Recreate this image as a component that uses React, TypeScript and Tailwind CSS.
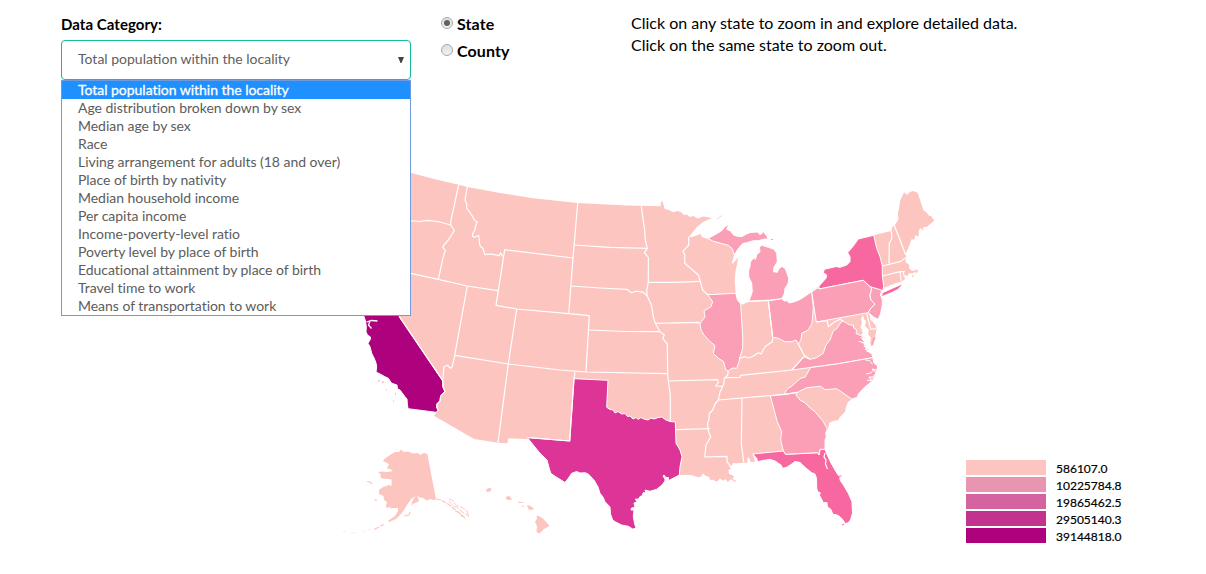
import React from "react";

const LIGHT = "#fcc5c0";
const ROSE = "#fa9fb5";
const PINK = "#f768a1";
const MAGENTA = "#dd3497";
const PURPLE = "#ae017e";

const categories = [
  "Total population within the locality",
  "Age distribution broken down by sex",
  "Median age by sex",
  "Race",
  "Living arrangement for adults (18 and over)",
  "Place of birth by nativity",
  "Median household income",
  "Per capita income",
  "Income-poverty-level ratio",
  "Poverty level by place of birth",
  "Educational attainment by place of birth",
  "Travel time to work",
  "Means of transportation to work",
];

const legend = [
  { color: "bg-[#fcc5c0]", label: "586107.0" },
  { color: "bg-[#e994b0]", label: "10225784.8" },
  { color: "bg-[#d5639f]", label: "19865462.5" },
  { color: "bg-[#c2328f]", label: "29505140.3" },
  { color: "bg-[#ae017e]", label: "39144818.0" },
];

// Contiguous land west of the Great Lakes and south along the coasts.
const mainland =
  "370,200 385,166 410.7,172.7 434,179 458.7,184.7 467.3,187 500,193 533,198.3 577.7,203 626.7,205.5 660.7,206.3 661,201.3 662.7,202 664.7,209 669,210 673.3,212.3 677,211 680.7,212 684,215 686.7,214.5 690,217 693.3,216 698,218.5 703.3,216.5 712,218 703.3,221.7 696.7,227.3 692,233 688.7,237 693.3,236.7 700.7,234 702,237 708,239 713.3,241.3 728.3,245.3 732.3,248.7 734.3,254 731.7,263.5 733,263.5 738.3,257.3 737.3,263 735.5,271 734.7,280 735.7,293.3 737.5,300 740.3,304 743,304.5 749,301.3 768.3,300.3 782,298.7 784,301 787.3,300.7 789,303 792.7,302.3 799,300 804,297 811.7,291.7 819,286 826,278.3 826.7,275 823.3,272.7 824.3,269.3 830,268 840,267.3 846.7,265 850,261.7 850,256.7 847.7,252.7 853.3,246 858.3,239 873.3,235.3 891.3,231 892.7,226 894.5,226.5 896,223 898.3,220 898,213 899.3,206.7 900,201 904,192.3 907.3,194.7 910,192 913.3,191 917.7,192.7 921,203 923.3,210 926.7,212.7 929.3,216 931,216 934.3,220.7 930,224.3 926.7,227 923.5,227 923,231 921,228 919,230 918.3,237 915.5,235 914,240 911.7,239 908.7,246.7 906,253.3 906,258.3 905.3,261.7 909.3,265 909,268 912,271 916,270 914.5,267.5 917.5,271 912,273.5 909,273 907.5,276 905,275 905,279 901.5,282 896.7,282.7 885,287.3 883,290 881,294 882.3,300 882.3,305 880.5,314 878,319.3 873.3,316.7 869,313 870.7,320 875,324.3 876.7,329.3 875,336.7 873.3,345 871,346.7 871.5,352 873,357.7 874,363 877.7,366 877,369 875,375 871.7,381.7 865,386.7 858.3,394 857.3,397.3 851.7,399 848,402 846,407 845,411.7 840,417 838.3,420 833,421 829.3,422.7 828,429.3 826,433 826.5,437 825,440 825,449.3 827.3,455 790,456 752.7,454 755,461.7 750.7,462 749,457.3 747.5,458 747.3,462.7 743.3,462.7 736.7,463.3 733,463 732,465.3 729,466 731,469 728.3,470 729,474 734,476 732.5,479 736,480.7 735.5,482 730.7,479.3 728,482 725,479 723.3,480.7 720,478.5 716.7,481.7 713,479.7 710,480 709,476.7 706,476 702.7,473.5 701,476.7 698.3,477.3 693,475.5 688.3,474.7 678.3,475 640,460 569.7,441 508.3,438.3 507.3,443.3 498.3,442.7 474,439 434,415.7 438,410 410,350 364,300";

const california =
  "364,300 390,300 399.3,316.7 442.7,380.7 443,387 445,391.7 440.7,396 440,401 437,404 436.7,407 438.3,410.7 436,412.3 408,408.7 407.3,403.3 407,399 405,396.7 400,390 397.5,389 397,385 391.7,383.3 388.3,378.3 385,376.7 381,374.5 376,372 376.7,366.7 376,363 374.5,359 371.7,353.3 370,346.7 368,343.3 370.5,339 370.5,337 367.5,335 366,332 366.3,326.7 365.5,321 364,316.7";

const texas =
  "574,378.7 608,380.3 606.7,407.3 610,409.5 613.3,410 615,413 618,411.5 621.7,414 625,413.5 627.5,416.5 630,416 633,419 636,417.5 638,419.5 641,417.5 644,419 648,420 651,418 654,419 658,417.5 661.7,417 666,420 670,421.5 675.3,422 676,443.3 680,450 682,456.7 680,466.7 679.3,475 675,477.3 668.3,480.7 668.5,477.5 666,477.5 664,475 663,476 665,479 665,481 662,485 656.7,489.3 650,491.3 645,490 646,493 643.3,492.5 642,496 640,496.5 638.3,499.3 635.5,499 637,502 634,503 635,507.5 631.5,508 631,510 634,510 633.3,516.7 634.5,523 636,528.3 632.7,529 628.3,526.3 621.7,525 615,521.7 612.7,520 610.5,514 610,507 605,501.7 603,497 600,493.3 598,487 594,480 588.3,474 585,472.7 580,473 576.7,471.5 571.7,473.3 568.3,478.3 565,482.5 556.7,477.3 550.7,473.3 548.8,466.7 547,460 540,453.3 533.3,445 527.5,437.7 569.7,441";

const florida =
  "752.7,454 783.3,451 785.7,454.3 817.7,452.7 819,455 820,449.3 825,449.3 827.3,455 831,463 835,470 838,475 840,476 840,480 844,486 848.3,493.3 852,501.7 852.5,513.3 850.5,520 848,523 845,523.5 843,520 840,516.7 837,515 832.7,514 831,509.5 827.3,506.7 827,502.5 823.3,502.7 821,498 819.3,495 820.5,493 817.5,491.5 816.7,488 816.5,478.3 815,474 811.7,472.7 805,467.3 800,462.5 795,461.5 791.7,464 786.7,467.3 782.7,468.3 781,465 778.3,463.3 775,461 770,459.3 761.7,460.7 757.7,461.7 756.7,458.3";

const georgia =
  "770.3,396 797.3,392.3 796,395 800,400 805,402.7 809,407 815,411.7 823.3,421.7 827.3,429 825.7,433 826.3,437 825,440 825,449.3 820,449.3 819,455 817.7,452.7 785.7,454.3 783.3,451 780.7,440 781.7,431.7 777.3,421.7";

const illinois =
  "707.7,294.7 735.7,293.3 737.5,300 740.7,304 742.7,336.7 742.7,348.3 740,356.7 739,361.7 736.7,368.3 733,368 730,369.5 728.3,371 725.7,370 723.5,361.5 718.3,358.3 713.3,353.3 715,345.5 710,341.7 704,335 701,330 700,323.5 705,317 704,311 711,306.7 712.7,301.7";

const upperMichigan =
  "708,238.5 715,234.7 721.7,230.7 725,226.7 729,224.3 726.7,229.3 730.7,231 733,234.5 736,236 741.7,236.7 746.7,234 750,232.5 757.3,232 760,234.5 762,233.5 764,231.3 765,234 767,236 768,239.3 765,239 758.3,240.7 753.3,240.7 746.7,242.7 742.7,243.5 739.3,247.3 736.7,251 734.3,255 732.3,248.7 728.3,245.3 713.3,241.3";

const lowerMichigan =
  "749,301.3 752.3,291.7 751.7,283.3 748.7,276.7 748.7,270 750,266.7 750.3,262 754.3,257.3 755.3,259.5 757,254 760,252 759.5,247.5 761.5,245 768.3,247.3 774,249.3 776.7,253.3 777.3,261.7 774,267.3 773.5,271.7 777.3,272.3 779,268.5 782,266.5 785,268.3 787,273 788.7,278.3 788,284 785,288.3 784.5,293 782,298.7 768.3,300.3";

const ohio =
  "768.3,301 782,298.7 784,301 787.3,300.7 789,303 792.7,302.3 799,300 804,297 811.7,291.7 813.3,308 812,323.3 808.3,330 801.7,333.3 801,340 798.3,344 796,340 791.7,341.7 785,341.7 778.3,338.3 772.7,337.3";

const newYork =
  "819,289 819,286 826,278.3 826.7,275 823.3,272.7 824.3,269.3 830,268 836,266.5 840,267.3 846.7,265 850,261.7 850,256.7 847.7,252.7 853.3,246 858.3,239 873.7,235.3 876.7,248.3 880,256.7 882.3,266 882.3,275 883.7,286.7 882.5,291 870,286.7 863.3,280.3";

const pennsylvania =
  "811.7,292 818.3,287.5 819,289 863.3,280.3 870,286.7 871.7,289 870,295 870.7,299.3 875,304.3 870.7,308.3 868.3,312.7 816.3,322";

const newJersey =
  "870,286.7 881.5,290 880.5,295 882.3,300 882.3,305 880.5,314 878,319.3 873.3,316.7 868.3,312.7 870.7,308.3 875,304.3 870.7,299.3 870,295 871.7,289";

const virginia =
  "840,323.3 843,321 846.7,323.3 850,325 853.3,325 853.5,328 856.7,330 856,333.5 862,336 865,339 862,339 867,344 864,344.5 868,349 865,349 872,354 872.7,357.7 836.7,364 791.7,370 804,356.7 810,359.3 816.7,357.7 823.3,353.3 826,345 830,340 833.3,330.7 837.3,328.3";

const northCarolina =
  "810.7,367.5 836.7,364 872.7,357.7 874,363 877.7,366 877,370 872,369 876,373 873,377 869,377 871.7,381.7 865,386.7 858.3,394 857.3,397.3 851.7,399 836.7,388.7 825,389.7 820.7,386.3 806.7,387.7 797.3,392.3 785,394.3 785,392 788.3,388.3 792,386 796.7,381.7 801,378 805,377.3 808,372";

const states: [string, string][] = [
  [california, PURPLE],
  [texas, MAGENTA],
  [florida, PINK],
  [georgia, ROSE],
  [illinois, ROSE],
  [upperMichigan, ROSE],
  [lowerMichigan, ROSE],
  [ohio, ROSE],
  [newYork, PINK],
  [pennsylvania, ROSE],
  [newJersey, ROSE],
  [virginia, ROSE],
  [northCarolina, ROSE],
];

const borders = [
  // Pacific and mountain states
  "410.7,220.7 419,221.5 428.3,220.3 440,222 450.7,225",
  "458.7,184.7 450.7,221.7 450.7,225 454.3,230.7 448.3,240 442.7,246.7 445.3,250.7 443.3,256.7 438.3,279.3",
  "410.7,273.3 438.3,279.3 467.3,286 497.7,290.7",
  "467.3,187 465,200 466.7,204 466.7,208.3 471.7,215 475,221 477.3,221.7 475.5,226 475,230 473,233 472.3,236 474.3,237.3 478.7,235.5 479.3,241 480,246 482.7,248 485,254.7 488,254 493.3,254.3 499.3,255.7 500.7,252.7 502.7,256.7",
  "573,258 504.7,249.7 496,305.3 516.7,309 568.7,313.7 589.3,315.7 586,372",
  "577.7,203 573,258 568.7,313.7",
  "467.3,286 454.7,355.3 452.3,366.7 450.7,368.3 447.3,365.3 444,366.7 442.7,380.7",
  "399.3,316.7 442.7,380.7 443,387 445,391.7 440.7,396 440,401 437,404 436.7,407 438.3,410.7",
  "454.7,355.3 508.3,364 560,370 586,372 667.3,373.7",
  "516.7,309 508.3,364 498,442.7",
  "575,372.3 574,378.7 569.7,441 528,437.5",
  // Plains
  "574.3,245 610,247.3 647.3,248.3",
  "571,286 600,288 626.7,289.3 631.7,292.7 636.7,291 643.3,292.3 647.3,296",
  "641.3,206.3 642.7,216.7 644.7,230 645.3,240 647.3,248.3 644.3,252.7 648.3,257.3 648.3,282.3 646.7,290 647.3,296 651.7,306 653.3,316.7 655.3,323.3 660,331.7 664.3,335 662.7,338.3 667.3,344 667.7,373.7 668.3,381 670.3,395 670.3,421",
  "589,330 625,331.5 660,331.7",
  "648.3,282.3 675,282.3 700,281.3",
  "655.3,323.3 698.3,322.3 700,324",
  "688.7,237 688.7,245 682.7,251.7 684.7,254 684.7,263.3 691.7,269.3 698.3,275 700.3,281.3 702.7,290 707.7,294.7",
  "668.3,381 717.3,379.7 718.5,382 715.7,386 722.7,386.3",
  "676,429.7 710,428.7",
  // Mississippi valley
  "728.3,371 727.7,375 724.3,378.3 724,383 722.7,386.7 720,392 718.3,400 715,404 712.7,410 709,414 709,419 707.7,423.3 708,430 710.7,437 706,445 704.7,457 727,456.3 727,461.7 730,465.7",
  "742,399 741.3,443.3 743.7,462.3",
  "718.3,400 785,394.3 797.3,392.3",
  "725,377.7 740,377.3 740.7,375.3 791.7,370 804,356.7",
  "739,358.3 745,356.7 749,358 753.3,356 758.3,352.7 761,354 765,346.7 770,343.3 772.3,341.7 772.7,337.3",
  "740.7,303 749,301.3 768.3,300.3 772.7,337.3",
  "798.3,344 804,355 810,359.3",
  // Mid-Atlantic
  "816.3,322 827.3,320.7 828.3,326.7 834,322.3 840,319.3 843,321",
  "866.7,313.3 870.7,329.3 876,328.7",
  // New England
  "891.3,231 892,238.3 889.3,243.3 889,263.3",
  "882.3,266 900,261.7 905.7,257.7",
  "894.3,225.5 900,240 905.7,255",
  "882.3,276 900,271.7 905,271.5",
  "900,271.7 901.3,281.5",
  "903,271.3 904.6,277.5",
];

function UnitedStatesMap() {
  return (
    <svg
      className="block h-[490px] w-[666px] shrink-0"
      viewBox="300 84 666 490"
      role="img"
    >
      <polygon points={mainland} fill={LIGHT} />
      {states.map(([points, fill], i) => (
        <polygon key={i} points={points} fill={fill} stroke="#fff" strokeWidth="1" strokeLinejoin="round" />
      ))}
      <g fill="none" stroke="#fff" strokeWidth="1.2" strokeLinejoin="round">
        {borders.map((points, i) => (
          <polyline key={i} points={points} />
        ))}
      </g>

      {/* Chesapeake Bay and the southern inlets */}
      <path
        d="M863 315 861 319 862 323 860.5 327 863 333 861 334.5 865 338 860 337 866 342 857 341 867 345 863 346 869 350 866 351 872 354 872 348 870 343 871 338 868 334 869 330 865 326 866 321 864 319Z"
        fill="#fff"
      />
      <path d="M865.5 360l4 .5 3 4M866 374l5-1 3-4M867 380l5 1" fill="none" stroke="#fff" strokeWidth="1" />
      <path d="M875.8 337 872.5 345 871.5 345 873 338Z" fill={ROSE} />
      <path d="M825 453l-1 4 2 3-.5 4 2 5" fill="none" stroke="#fff" strokeWidth="1.2" />
      <path d="M366.5 322l5-1.5 6 .5M370 321l-1.5 4 3 3.5" fill="none" stroke="#fff" strokeWidth="1.3" />

      {/* Islands off the coasts */}
      <path d="M882 296 883 293 890 289.8 897 286.8 902 284.5 898 289 891 292.5Z" fill={PINK} />
      <path d="M717 219 722 215.5" stroke={LIGHT} strokeWidth=".8" />
      <path d="M771 239.5h2" stroke={ROSE} strokeWidth="1" />
      <path d="M912 276.5l2-1M916 273l2-3" stroke={LIGHT} strokeWidth="1.2" />
      <path d="M378 381h1.5M382 382h1.5M395 394h1M393 401h.7M386 390h.7" stroke={PURPLE} strokeWidth=".8" opacity=".6" />
      <path d="M842 525l2-1M839.5 476h2" stroke={PINK} strokeWidth="1" />

      {/* Alaska */}
      <path
        d="M427.3 454 436 499 434 500 430 499 427 500.5 423 498 420 497.5 417 496 419 500 418 502 413.5 503.5 411.7 506 412 502 414 498 416 496 411 499 407 505 404 510 401 514 396 519 389 522 388 521 395 516 398 511 398 508 394 508 391 508.5 390 507 386.5 508 386 505 387 502 384 500 383.5 496 379 494 379 490 383 487 389 485 391.5 486 391.7 479.5 388 479 382 478.5 380 476 381 474 378 473 380 471.5 388 472 393 471 390 469 387 468.5 389 464 387 463 383 461 385 458.5 390 455 395 452 399 452 401 449.5 404 452 408 451.5 413 453.5 418 453 420 455 424 453Z"
        fill={LIGHT}
      />
      <g fill="none" stroke={LIGHT}>
        <path d="M367 481.5l3 .5 2 2M374 500l3 .5M404 516l5-1 1-3M384 524.5l-4 1.5M379 527l-5 2.5" strokeWidth="1.2" />
        <path d="M371 529l-3 1M365 531l-3 1M356 532.5l-5 .5M346 531.5l-3 .5" strokeWidth=".5" opacity=".7" />
        <path d="M436 499l5 1 7 4 5 4 5 4 5 4 3 3" strokeWidth="1.1" strokeDasharray="5 1" />
        <path d="M449 499l3 1 4 5 7 3 4 3 2 6-3-3-4-2-4-4-5-2-4-5M455 511l5 2 2 4" strokeWidth=".9" strokeDasharray="6 1" />
      </g>

      {/* Hawaii */}
      <g fill={LIGHT}>
        <path d="M486 489.5l3-1.5 2.5.5-1 3-3.5.5Z" />
        <path d="M505.5 497l2-.5 1.5-1 3 4-2 .5-3.5-.5Z" />
        <path d="M518 501.7l5 .3v1l-5-.3ZM522 505.5l2 .5v1l-2-.5ZM526.5 505.5l3 0 4.5 3-1 1-4 .5-1-2.5Z" />
        <path d="M480 491.2l1.5-.7.3.7Z" />
        <path d="M536.5 515.5l4 1.5 2.5 1.5 3 3.5 3.5 4-5.5 3-4.5 4.5-3-1.5.5-6-2-4 2-3.5Z" />
      </g>
    </svg>
  );
}

function Radio({ label, checked }: { label: string; checked?: boolean }) {
  return (
    <label className="flex h-[27px] items-center gap-1">
      <span className="mb-[3px] flex size-3 items-center justify-center rounded-full border border-[#aaa] bg-linear-to-b from-[#dedede] to-[#f2f2f2]">
        {checked && <span className="size-1.5 rounded-full bg-[#606060]" />}
      </span>
      <span className="pb-[2px] text-[16px] font-bold tracking-[0.1px]">{label}</span>
    </label>
  );
}

export default function App() {
  return (
    <main className="h-[574px] w-[1206px] overflow-hidden bg-white font-[Lato,sans-serif] text-black">
      <header className="flex h-[84px] pl-[61px]">
        <div className="relative w-[350px] pt-[13px]">
          <div className="h-[27px] text-[15px] leading-[23px] font-bold tracking-[0.05px]">Data Category:</div>
          <div className="flex h-10 items-center justify-between rounded border border-[#18bc9c] pr-[6px] pb-[2px] pl-4 text-[14px] text-[#606060]">
            <span className="pb-[2px]">{categories[0]}</span>
            <svg className="mt-px h-[6px] w-[6px]" viewBox="0 0 6 6">
              <path d="M0 0h6L3.5 6h-1Z" fill="#444" />
            </svg>
          </div>
          <ul className="absolute top-[80px] left-0 h-[236px] w-[350px] border border-[#6f9bdc] bg-white text-[14px] leading-[18px] tracking-[-0.03px] text-[#5c5c5c] [font-variant-ligatures:none]">
            {categories.map((name, i) => (
              <li
                key={name}
                className={i === 0 ? "bg-[#1e90ff] pl-4 text-white [-webkit-text-stroke:0.3px_white]" : "pl-4"}
              >
                {name}
              </li>
            ))}
          </ul>
        </div>
        <div className="ml-[30px] w-[190px] pt-[11px]">
          <Radio label="State" checked />
          <Radio label="County" />
        </div>
        <p className="pt-3 text-[16px] leading-[22px]">
          Click on any state to zoom in and explore detailed data.
          <br />
          Click on the same state to zoom out.
        </p>
      </header>
      <section className="flex pl-[300px]">
        <UnitedStatesMap />
        <ul className="mt-[376px] flex flex-col gap-[2px]">
          {legend.map(({ color, label }) => (
            <li key={label} className="flex h-[15px] items-center gap-[10px]">
              <span className={`h-[15px] w-20 ${color}`} />
              <span className="pt-px text-[12px] leading-[15px] [-webkit-text-stroke:0.2px_black]">{label}</span>
            </li>
          ))}
        </ul>
      </section>
    </main>
  );
}
